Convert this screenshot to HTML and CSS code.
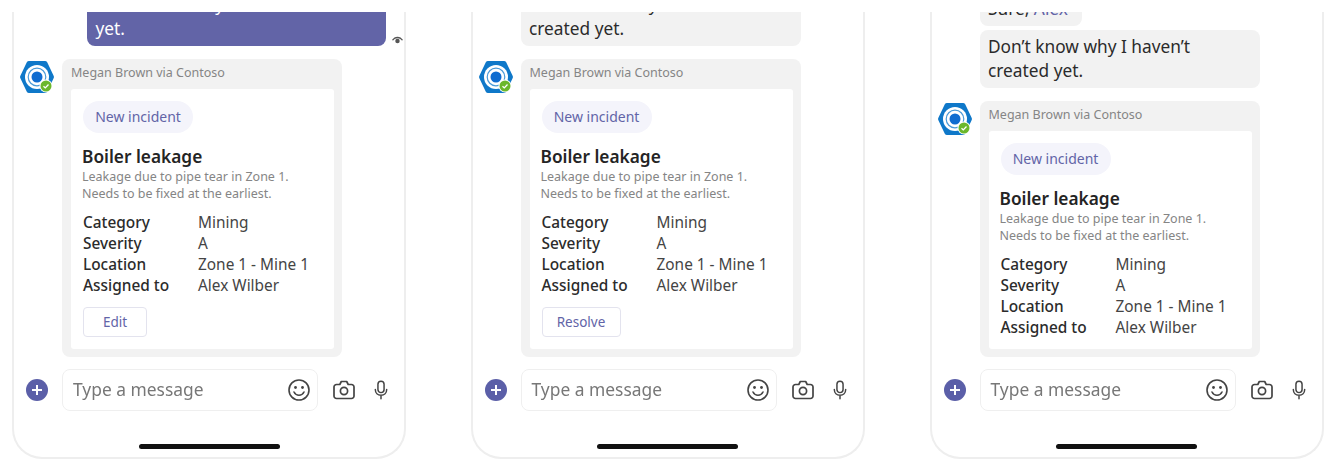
FILE: index.html
```html
<!DOCTYPE html>
<html lang="en">
<head>
  <meta charset="UTF-8">
  <title>Incident cards</title>
  <link rel="stylesheet" href="styles.css">
</head>
<body>
<svg class="defs" width="0" height="0">
  <symbol id="bot" viewBox="0 0 34 34">
    <path d="M9 1h16a2.500 2.500 0 0 1 2.200 1.300l6.300 13.200a3 3 0 0 1 0 3l-6.300 13.200a2.500 2.500 0 0 1-2.200 1.300h-16a2.500 2.500 0 0 1-2.200-1.300l-6.300-13.200a3 3 0 0 1 0-3l6.300-13.200a2.500 2.500 0 0 1 2.200-1.300z" fill="#0f78c9"/>
    <circle cx="17" cy="17" r="12" fill="#fff"/>
    <circle cx="17" cy="17" r="8.800" fill="none" stroke="#4a9ad8" stroke-width="1.200"/>
    <circle cx="17" cy="17" r="5.500" fill="#0f6cd0"/>
    <circle cx="26" cy="26" r="6.500" fill="#fff"/>
    <circle cx="26" cy="26" r="5.500" fill="#6bb72b"/>
    <path d="M23.500 26.200l1.800 1.700 3.200-3.400" fill="none" stroke="#fff" stroke-width="1.300"/>
  </symbol>
  <symbol id="plus" viewBox="0 0 22 22">
    <circle cx="11" cy="11" r="11" fill="#5b5fa8"/>
    <path d="M11 6v10M6 11h10" stroke="#fff" stroke-width="2"/>
  </symbol>
  <symbol id="smile" viewBox="0 0 22 22">
    <circle cx="11" cy="11" r="10" fill="none" stroke="#444" stroke-width="1.600"/>
    <circle cx="7.500" cy="8.500" r="1.400" fill="#444"/>
    <circle cx="14.500" cy="8.500" r="1.400" fill="#444"/>
    <path d="M6 13c1.200 2.300 3 3.300 5 3.300s3.800-1 5-3.300" fill="none" stroke="#444" stroke-width="1.600" stroke-linecap="round"/>
  </symbol>
  <symbol id="camera" viewBox="0 0 22 20">
    <path d="M3.500 4.500h3.300l1.500-3h5.400l1.500 3h3.300a2.500 2.500 0 0 1 2.500 2.500v9a2.500 2.500 0 0 1-2.500 2.500h-15a2.500 2.500 0 0 1-2.500-2.500v-9a2.500 2.500 0 0 1 2.500-2.500z" fill="none" stroke="#444" stroke-width="1.700" stroke-linejoin="round"/>
    <circle cx="11" cy="11" r="3.600" fill="none" stroke="#444" stroke-width="1.700"/>
  </symbol>
  <symbol id="mic" viewBox="0 0 16 22">
    <rect x="4.500" y="1" width="7" height="13" rx="3.500" fill="none" stroke="#444" stroke-width="1.700"/>
    <path d="M1.500 10.500c0 4 2.800 6.500 6.500 6.500s6.500-2.500 6.500-6.500M8 17v4" fill="none" stroke="#444" stroke-width="1.700" stroke-linecap="round"/>
  </symbol>
  <symbol id="eye" viewBox="0 0 14 10">
    <path d="M1 5c1.600-2.400 3.600-3.600 6-3.600s4.400 1.200 6 3.600l-1.300.6C10.400 4 8.800 3.200 7 3.200S3.600 4 2.300 5.600z" fill="#555"/>
    <circle cx="7" cy="6" r="2.400" fill="#555"/>
  </symbol>
</svg>

<div class="phones">

  <section class="phone">
    <div class="chat">
      <div class="sent-row">
        <div class="bubble bubble-sent">Don’t know why I haven’t created yet.</div>
        <svg class="seen"><use href="#eye"/></svg>
      </div>
      <div class="bot-row">
        <svg class="avatar"><use href="#bot"/></svg>
        <div class="bot-bubble">
          <div class="sender">Megan Brown via Contoso</div>
          <div class="card">
            <span class="pill">New incident</span>
            <h3>Boiler leakage</h3>
            <p class="desc">Leakage due to pipe tear in Zone 1.<br>Needs to be fixed at the earliest.</p>
            <dl class="facts">
              <dt>Category</dt><dd>Mining</dd>
              <dt>Severity</dt><dd>A</dd>
              <dt>Location</dt><dd>Zone 1 - Mine 1</dd>
              <dt>Assigned to</dt><dd>Alex Wilber</dd>
            </dl>
            <button class="action action-edit">Edit</button>
          </div>
        </div>
      </div>
    </div>
    <div class="compose">
      <svg class="plus"><use href="#plus"/></svg>
      <div class="input"><span>Type a message</span><svg class="smile"><use href="#smile"/></svg></div>
      <svg class="camera"><use href="#camera"/></svg>
      <svg class="mic"><use href="#mic"/></svg>
    </div>
    <div class="home"></div>
  </section>

  <section class="phone">
    <div class="chat">
      <div class="bubble bubble-in">Don’t know why I haven’t created yet.</div>
      <div class="bot-row">
        <svg class="avatar"><use href="#bot"/></svg>
        <div class="bot-bubble">
          <div class="sender">Megan Brown via Contoso</div>
          <div class="card">
            <span class="pill">New incident</span>
            <h3>Boiler leakage</h3>
            <p class="desc">Leakage due to pipe tear in Zone 1.<br>Needs to be fixed at the earliest.</p>
            <dl class="facts">
              <dt>Category</dt><dd>Mining</dd>
              <dt>Severity</dt><dd>A</dd>
              <dt>Location</dt><dd>Zone 1 - Mine 1</dd>
              <dt>Assigned to</dt><dd>Alex Wilber</dd>
            </dl>
            <button class="action action-resolve">Resolve</button>
          </div>
        </div>
      </div>
    </div>
    <div class="compose">
      <svg class="plus"><use href="#plus"/></svg>
      <div class="input"><span>Type a message</span><svg class="smile"><use href="#smile"/></svg></div>
      <svg class="camera"><use href="#camera"/></svg>
      <svg class="mic"><use href="#mic"/></svg>
    </div>
    <div class="home"></div>
  </section>

  <section class="phone">
    <div class="chat">
      <div class="bubble bubble-in bubble-short">Sure, <span class="mention">Alex</span></div>
      <div class="bubble bubble-in">Don’t know why I haven’t created yet.</div>
      <div class="bot-row">
        <svg class="avatar"><use href="#bot"/></svg>
        <div class="bot-bubble">
          <div class="sender">Megan Brown via Contoso</div>
          <div class="card">
            <span class="pill">New incident</span>
            <h3>Boiler leakage</h3>
            <p class="desc">Leakage due to pipe tear in Zone 1.<br>Needs to be fixed at the earliest.</p>
            <dl class="facts">
              <dt>Category</dt><dd>Mining</dd>
              <dt>Severity</dt><dd>A</dd>
              <dt>Location</dt><dd>Zone 1 - Mine 1</dd>
              <dt>Assigned to</dt><dd>Alex Wilber</dd>
            </dl>
          </div>
        </div>
      </div>
    </div>
    <div class="compose">
      <svg class="plus"><use href="#plus"/></svg>
      <div class="input"><span>Type a message</span><svg class="smile"><use href="#smile"/></svg></div>
      <svg class="camera"><use href="#camera"/></svg>
      <svg class="mic"><use href="#mic"/></svg>
    </div>
    <div class="home"></div>
  </section>

</div>
</body>
</html>
```

FILE: styles.css
```css
body {
  margin: 0;
  background: #fff;
  font-family: "Noto Sans", "Liberation Sans", sans-serif;
  color: #333;
  overflow: hidden;
}
.defs {
  position: absolute;
}
.phones {
  display: flex;
  gap: 64.500px;
  padding: 12px 0 0 12px;
  filter: blur(0.5px);
}
.phone {
  flex: none;
  width: 394px;
  height: 447px;
  box-sizing: border-box;
  display: flex;
  flex-direction: column;
  border: 2px solid #eeeeee;
  border-top: none;
  border-radius: 0 0 30px 30px;
}
.phone:last-child {
  margin-left: 0.500px;
}
.chat {
  flex: 1;
  min-height: 0;
  overflow: hidden;
  display: flex;
  flex-direction: column;
  justify-content: flex-end;
  padding-bottom: 12px;
}
.bubble {
  flex: none;
  box-sizing: border-box;
  padding: 5px 8.500px;
  border-radius: 8px;
  font-size: 17.300px;
  line-height: 24px;
}
.bubble-in {
  width: 280px;
  margin: 0 0 13px 48px;
  background: #f2f2f2;
  color: #2b2b2b;
}
.bubble-short {
  width: 102px;
  margin-bottom: 4px;
}
.mention {
  color: #6264a7;
}
.sent-row {
  flex: none;
  display: flex;
  align-items: flex-end;
  gap: 5px;
  margin: 0 0 13px 73px;
}
.bubble-sent {
  width: 299px;
  background: #6264a7;
  color: #fff;
}
.seen {
  width: 14px;
  height: 10px;
  margin-bottom: 1px;
}
.bot-row {
  flex: none;
  display: flex;
  gap: 8px;
  padding-left: 6px;
}
.avatar {
  width: 34px;
  height: 34px;
  margin-top: 1px;
}
.bot-bubble {
  width: 280px;
  box-sizing: border-box;
  padding: 0 8px 8px 9px;
  border-radius: 8px;
  background: #f2f2f2;
}
.sender {
  padding: 6px 0 8px;
  font-size: 12.500px;
  line-height: 16px;
  color: #858585;
}
.card {
  padding: 12px 12px 11px;
  border-radius: 3px;
  background: #fff;
}
.pill {
  display: block;
  width: 110px;
  height: 32px;
  border-radius: 16px;
  background: #f4f4fb;
  color: #6264a7;
  font-size: 14px;
  line-height: 32px;
  text-align: center;
}
.card h3 {
  margin: 13px 0 0 -1px;
  font-size: 17.300px;
  line-height: 22px;
  font-weight: 600;
  color: #242424;
}
.desc {
  margin: 0 0 0 -1px;
  font-size: 12.500px;
  line-height: 17px;
  color: #858585;
}
.facts {
  display: grid;
  grid-template-columns: 115px 1fr;
  margin: 10px 0 0;
  font-size: 15.400px;
  line-height: 21px;
}
.facts dt {
  font-weight: 500;
  color: #2b2b2b;
}
.facts dd {
  margin: 0;
  color: #444;
}
.action {
  display: block;
  height: 30px;
  margin: 11px 0 1px;
  padding: 0;
  border: 1.500px solid #e3e3ee;
  border-radius: 4px;
  background: #fff;
  color: #6264a7;
  font-family: inherit;
  font-size: 13.500px;
}
.action-edit {
  width: 64px;
}
.action-resolve {
  width: 79px;
}
.compose {
  flex: none;
  display: flex;
  align-items: center;
  height: 42px;
  padding-left: 12px;
}
.plus {
  width: 22px;
  height: 22px;
  margin-right: 14px;
}
.input {
  width: 256px;
  height: 42px;
  box-sizing: border-box;
  display: flex;
  align-items: center;
  justify-content: space-between;
  padding: 0 7px 0 10px;
  border: 1px solid #efefef;
  border-radius: 8px;
  font-size: 17.400px;
  color: #777;
  margin-right: 15px;
}
.input span {
  margin-bottom: 2px;
}
.smile {
  width: 22px;
  height: 22px;
}
.camera {
  width: 22px;
  height: 20px;
  margin-right: 19px;
}
.mic {
  width: 14px;
  height: 22px;
}
.home {
  flex: none;
  width: 141px;
  height: 5px;
  margin: 33px auto 8px;
  border-radius: 3px;
  background: #111;
}
```
